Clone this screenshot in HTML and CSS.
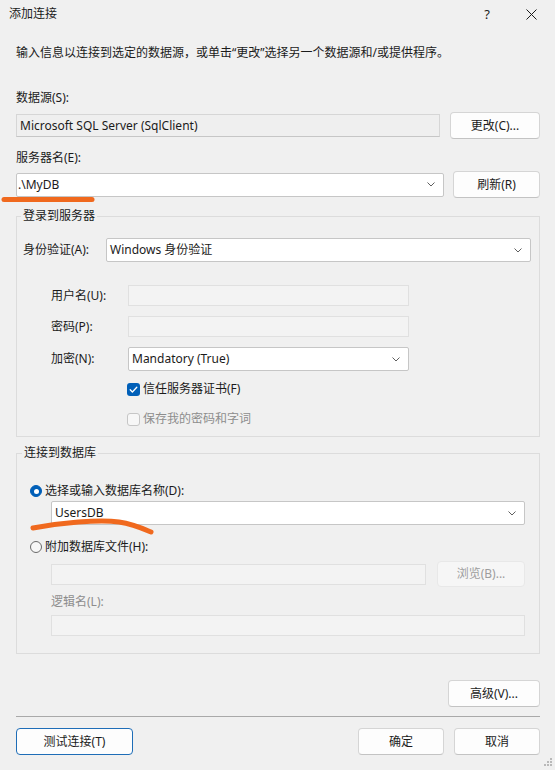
FILE: index.html
```html
<!DOCTYPE html>
<html lang="zh-CN">
<head>
<meta charset="utf-8">
<title>添加连接</title>
<link rel="stylesheet" href="styles.css">
</head>
<body>
<div class="dialog">
  <div class="titlebar">
    <span class="title">添加连接</span>
    <span class="caption">
      <span class="cap-btn help">?</span>
      <span class="cap-btn close"><svg width="11" height="11" viewBox="0 0 11 11"><path d="M0.5 0.5 L10.5 10.5 M10.5 0.5 L0.5 10.5" stroke="#1b1b1b" stroke-width="1" fill="none"/></svg></span>
    </span>
  </div>

  <div class="content">
    <p class="desc">输入信息以连接到选定的数据源，或单击“更改”选择另一个数据源和/或提供程序。</p>

    <div class="label l-ds">数据源(S):</div>
    <div class="row r-ds">
      <div class="readonly">Microsoft SQL Server (SqlClient)</div>
      <button class="btn b-change">更改(C)...</button>
    </div>

    <div class="label l-server">服务器名(E):</div>
    <div class="row r-server">
      <div class="combo c-server"><span class="val v-server">.\MyDB</span><svg class="chev" width="8" height="5" viewBox="0 0 8 5"><path d="M0.5 0.5 L4 4 L7.5 0.5" stroke="#5f5f5f" stroke-width="1" fill="none"/></svg></div>
      <button class="btn b-refresh">刷新(R)</button>
    </div>

    <fieldset class="group g-login">
      <legend>登录到服务器</legend>
      <div class="row r-auth">
        <span class="lbl-auth">身份验证(A):</span>
        <div class="combo c-auth"><span class="val">Windows 身份验证</span><svg class="chev" width="8" height="5" viewBox="0 0 8 5"><path d="M0.5 0.5 L4 4 L7.5 0.5" stroke="#5f5f5f" stroke-width="1" fill="none"/></svg></div>
      </div>
      <div class="row r-sub r-user">
        <span class="lbl-sub">用户名(U):</span>
        <div class="field off"></div>
      </div>
      <div class="row r-sub r-pass">
        <span class="lbl-sub">密码(P):</span>
        <div class="field off"></div>
      </div>
      <div class="row r-sub r-enc">
        <span class="lbl-sub">加密(N):</span>
        <div class="combo c-enc"><span class="val">Mandatory (True)</span><svg class="chev" width="8" height="5" viewBox="0 0 8 5"><path d="M0.5 0.5 L4 4 L7.5 0.5" stroke="#5f5f5f" stroke-width="1" fill="none"/></svg></div>
      </div>
      <div class="check-row ck1">
        <span class="checkbox on"><svg width="13" height="13" viewBox="0 0 13 13"><path d="M3.2 6.8 L5.4 9 L9.8 4.3" stroke="#fff" stroke-width="1.3" fill="none" stroke-linecap="round" stroke-linejoin="round"/></svg></span>
        <span>信任服务器证书(F)</span>
      </div>
      <div class="check-row ck2 dim">
        <span class="checkbox off"></span>
        <span>保存我的密码和字词</span>
      </div>
    </fieldset>

    <fieldset class="group g-db">
      <legend>连接到数据库</legend>
      <div class="radio-row rd1">
        <span class="radio on"></span>
        <span>选择或输入数据库名称(D):</span>
      </div>
      <div class="combo c-db"><span class="val">UsersDB</span><svg class="chev" width="8" height="5" viewBox="0 0 8 5"><path d="M0.5 0.5 L4 4 L7.5 0.5" stroke="#5f5f5f" stroke-width="1" fill="none"/></svg></div>
      <div class="radio-row rd2">
        <span class="radio"></span>
        <span>附加数据库文件(H):</span>
      </div>
      <div class="row r-file">
        <div class="field off f-file"></div>
        <button class="btn disabled b-browse">浏览(B)...</button>
      </div>
      <div class="label dim l-logic">逻辑名(L):</div>
      <div class="field off f-logic"></div>
    </fieldset>

    <div class="row r-adv">
      <button class="btn b-adv">高级(V)...</button>
    </div>
    <div class="separator"></div>
    <div class="row r-bottom">
      <button class="btn b-test">测试连接(T)</button>
      <span class="spacer"></span>
      <button class="btn b-ok">确定</button>
      <button class="btn b-cancel">取消</button>
    </div>
  </div>

  <svg class="mark mark1" width="100" height="12" viewBox="0 0 100 12"><path d="M4 5.5 L92 5.5" stroke="#f0691e" stroke-width="5" stroke-linecap="round" fill="none"/></svg>
  <svg class="mark mark2" width="140" height="24" viewBox="0 0 140 24"><path d="M4 14 C 30 9, 70 5, 90 8 C 104 10, 115 15, 122 18" stroke="#f0691e" stroke-width="5" stroke-linecap="round" fill="none"/></svg>
  <svg class="grip" width="8" height="8" viewBox="0 0 8 8"><rect x="6" y="0" width="2" height="2" fill="#b9b9b9"/><rect x="3" y="3" width="2" height="2" fill="#b9b9b9"/><rect x="6" y="3" width="2" height="2" fill="#b9b9b9"/><rect x="0" y="6" width="2" height="2" fill="#b9b9b9"/><rect x="3" y="6" width="2" height="2" fill="#b9b9b9"/><rect x="6" y="6" width="2" height="2" fill="#b9b9b9"/></svg>
</div>
</body>
</html>
```

FILE: styles.css
```css
* { box-sizing: border-box; }
html, body { margin: 0; padding: 0; }
body {
  width: 555px;
  height: 770px;
  overflow: hidden;
  background: #f0f0f0;
  font-family: "Noto Sans", "Noto Sans CJK SC", sans-serif;
  font-size: 12px;
  color: #1b1b1b;
}
.dialog {
  position: relative;
  width: 555px;
  height: 770px;
  display: flex;
  flex-direction: column;
}
.titlebar {
  height: 28px;
  display: flex;
  align-items: center;
}
.title {
  flex: 1;
  padding-left: 9px;
  line-height: 16px;
}
.caption { display: flex; height: 28px; }
.cap-btn {
  display: flex;
  align-items: center;
  justify-content: center;
  height: 28px;
}
.help { width: 40px; font-size: 13px; }
.close { width: 48px; }

.content {
  display: flex;
  flex-direction: column;
  padding: 0 15px 0 16px;
}
.desc { margin: 17px 0 0; line-height: 16px; }
.label { line-height: 16px; }
.dim { color: #8d8d8d; }
.l-ds { margin-top: 29px; }
.l-server { margin-top: 11px; }

.row { display: flex; align-items: center; }
.r-ds { margin-top: 6px; height: 27px; gap: 10px; }
.r-server { margin-top: 5px; height: 27px; gap: 9px; }

.readonly {
  flex: 1;
  height: 23px;
  border: 1px solid #d6d6d6;
  border-bottom-color: #c6c6c6;
  background: #efefef;
  padding-left: 3px;
  line-height: 21px;
  white-space: nowrap;
}

.btn {
  font: inherit;
  color: #1b1b1b;
  background: #fdfdfd;
  border: 1px solid #d5d5d5;
  border-bottom-color: #c3c3c3;
  border-radius: 4px;
  height: 27px;
  padding: 0;
  line-height: 16px;
}
.btn.disabled {
  background: #f6f6f6;
  border-color: #e8e8e8;
  color: #9d9d9d;
}
.b-change { width: 90px; }
.b-refresh { width: 87px; height: 27px; }

.combo {
  display: flex;
  align-items: center;
  height: 24px;
  background: #ffffff;
  border: 1px solid #c6c6c6;
  border-radius: 2px;
  padding: 0 8px 0 3px;
  line-height: 16px;
  white-space: nowrap;
}
.combo .val { flex: 1; }
.combo .chev { flex: none; }
.c-server { flex: 1; padding-left: 1px; }

.field {
  height: 21px;
  border: 1px solid #e0e0e0;
  background: #f3f3f3;
}

.group {
  margin: 0;
  min-width: 0;
  border: 1px solid #dcdcdc;
}
.group legend {
  padding: 0 2px;
  line-height: 16px;
}
.g-login {
  margin-top: 10px;
  padding: 0 8px 9px 6px;
}
.g-login legend { margin-left: -2px; }

.r-auth { margin-top: 14px; height: 24px; }
.lbl-auth { width: 83px; line-height: 16px; }
.c-auth { flex: 1; }
.r-sub { padding-left: 28px; }
.lbl-sub { width: 77px; line-height: 16px; }
.r-sub .field, .r-sub .combo { width: 281px; }
.r-user { margin-top: 23px; height: 21px; }
.r-pass { margin-top: 10px; height: 21px; }
.r-enc { margin-top: 10px; height: 24px; }

.check-row {
  display: flex;
  align-items: center;
  gap: 3px;
  height: 16px;
  margin-left: 104px;
  line-height: 16px;
}
.ck1 { margin-top: 10px; }
.ck2 { margin-top: 14px; }
.checkbox {
  width: 13px;
  height: 13px;
  border-radius: 3px;
  flex: none;
  display: block;
}
.checkbox svg { display: block; }
.checkbox.on { background: #005fb8; }
.checkbox.off { background: #f7f7f7; border: 1px solid #c6c6c6; }

.g-db {
  margin-top: 8px;
  padding: 0 14px 17px 13px;
}
.g-db legend { margin-left: -8px; }
.radio-row {
  display: flex;
  align-items: center;
  gap: 3px;
  height: 16px;
  line-height: 16px;
}
.rd1 { margin-top: 22px; }
.rd2 { margin-top: 14px; }
.radio {
  width: 12px;
  height: 12px;
  border-radius: 50%;
  flex: none;
  background: #f7f7f7;
  border: 1px solid #6a6a6a;
  display: flex;
  align-items: center;
  justify-content: center;
}
.radio.on { background: #005fb8; border-color: #005fb8; }
.radio.on::after {
  content: "";
  width: 5px;
  height: 5px;
  border-radius: 50%;
  background: #ffffff;
}
.c-db { margin: 2px 0 0 21px; }
.r-file { margin: 6px 0 0 21px; height: 26px; gap: 11px; }
.f-file { flex: 1; }
.b-browse { width: 88px; height: 26px; }
.l-logic { margin: 7px 0 0 21px; }
.f-logic { margin: 5px 0 0 21px; }

.r-adv { margin-top: 26px; height: 27px; justify-content: flex-end; }
.b-adv { width: 92px; }
.separator { margin-top: 9px; height: 1px; background: #a9a9a9; }
.r-bottom { margin-top: 11px; height: 27px; gap: 10px; }
.spacer { flex: 1; }
.b-test { width: 117px; border: 1px solid #1e6db7; }
.b-ok, .b-cancel { width: 86px; }

.mark { position: absolute; }
.mark1 { left: 0; top: 194px; }
.mark2 { left: 29px; top: 514px; }
.grip { position: absolute; right: 3px; bottom: 4px; }
```
